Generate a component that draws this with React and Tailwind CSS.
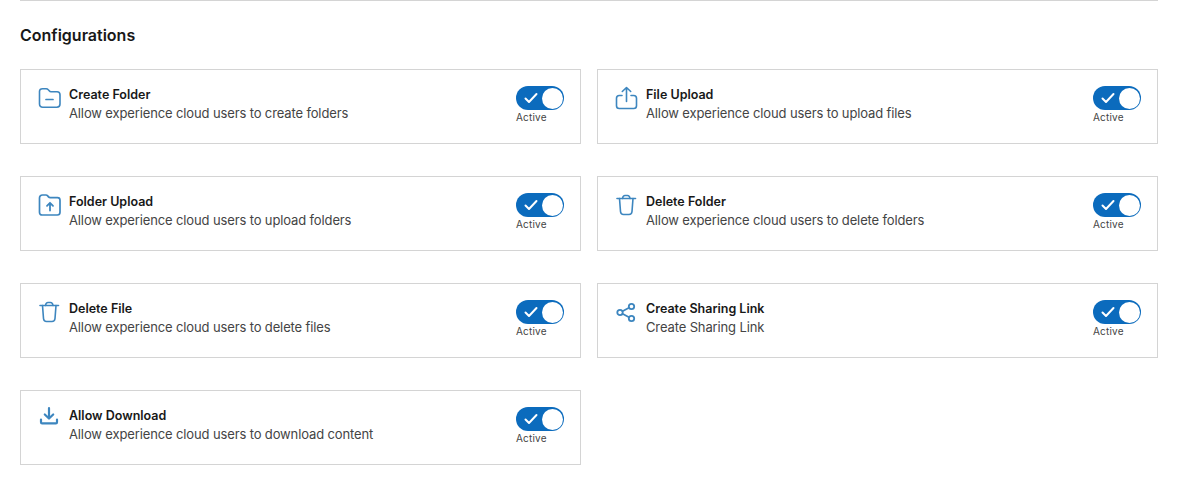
const C = "#3d86bf";
const stroke = { fill: "none", stroke: C, strokeWidth: 1.6, strokeLinecap: "round", strokeLinejoin: "round" };

const FolderMinus = () => (
  <svg width="24" height="24" viewBox="0 0 24 24" {...stroke}>
    <path d="M1.500 5.500C1.500 3.700 2.700 2.700 4.500 2.700h3.600c1 0 1.600.4 2.200 1.100l.9 1c.5.6 1 .9 1.800.9h6c1.900 0 3 1.200 3 3v9.300c0 2-1.300 3.200-3.200 3.200H4.700c-1.900 0-3.200-1.200-3.200-3.200z" />
    <path d="M8 13.500h7" strokeWidth="1.700" />
  </svg>
);
const Upload = () => (
  <svg width="24" height="24" viewBox="0 0 24 24" {...stroke}>
    <path d="M7 9.500H4.300C2.600 9.500 1.500 10.600 1.500 12.300v7.400c0 1.800 1.100 2.800 2.800 2.800h14.400c1.700 0 2.800-1 2.800-2.800v-7.400c0-1.700-1.100-2.800-2.800-2.800H16" />
    <path d="M11.500 15.500V1.500M7.300 5.500l4.200-4 4.200 4" />
  </svg>
);
const FolderUp = () => (
  <svg width="24" height="24" viewBox="0 0 24 24" {...stroke} strokeWidth="1.700">
    <path d="M1.500 5C1.500 3.200 2.600 2 4.500 2h3.400c.8 0 1.300.3 1.800.9l.8 1c.5.600 1 .8 1.800.8h7.200c1.600 0 2.500 1 2.500 2.600v12c0 1.700-1 2.700-2.700 2.700H4.200c-1.700 0-2.700-1-2.700-2.700z" />
    <path d="M12 17.500V10M9 12.800l3-3 3 3" strokeWidth="1.800" />
  </svg>
);
const Trash = () => (
  <svg width="24" height="24" viewBox="0 0 24 24" {...stroke}>
    <path d="M2 5.500h18.500" />
    <path d="M7.500 5.500c.3-2 1-3 2.500-3h2.500c1.500 0 2.200 1 2.500 3" />
    <path d="M4.500 5.500l1 13c.2 2 1.200 3 3 3h5.500c1.800 0 2.800-1 3-3l1-13" />
  </svg>
);
const Share = () => (
  <svg width="24" height="24" viewBox="0 0 24 24" {...stroke} strokeWidth="1.800">
    <circle cx="5" cy="12.500" r="2.700" />
    <circle cx="16.500" cy="6.500" r="2.700" />
    <circle cx="16.500" cy="18.500" r="2.700" />
    <path d="M7.500 11.200l6.500-3.400M7.500 13.800l6.500 3.400" />
  </svg>
);
const Download = () => (
  <svg width="24" height="24" viewBox="0 0 24 24" fill="none" stroke={C} strokeLinecap="round" strokeLinejoin="round">
    <path d="M11 1.200v10M6.800 7.500l4.200 4 4.200-4" strokeWidth="2.200" />
    <path d="M3 12.500v2.800c0 .7.400 1.100 1.100 1.100h13.800c.7 0 1.100-.4 1.100-1.100v-2.800" strokeWidth="2.200" />
  </svg>
);

const Toggle = () => (
  <div className="flex flex-col shrink-0 w-12">
    <div className="flex items-center justify-between w-12 h-6 rounded-full bg-[#0b6bbd] pl-[8px] pr-[1.500px]">
      <svg width="14" height="12" viewBox="0 0 14 12" fill="none" stroke="#fff" strokeWidth="2" strokeLinecap="round" strokeLinejoin="round">
        <path d="M1.500 6.500 5 10l7.500-8" />
      </svg>
      <div className="w-[21px] h-[21px] rounded-full bg-white" />
    </div>
    <span className="text-[10px] leading-[14px] text-[#444] tracking-[0.2px]">Active</span>
  </div>
);

const items = [
  { icon: <FolderMinus />, t: "Create Folder", d: "Allow experience cloud users to create folders" },
  { icon: <Upload />, t: "File Upload", d: "Allow experience cloud users to upload files" },
  { icon: <FolderUp />, t: "Folder Upload", d: "Allow experience cloud users to upload folders" },
  { icon: <Trash />, t: "Delete Folder", d: "Allow experience cloud users to delete folders" },
  { icon: <Trash />, t: "Delete File", d: "Allow experience cloud users to delete files" },
  { icon: <Share />, t: "Create Sharing Link", d: "Create Sharing Link" },
  { icon: <Download />, t: "Allow Download", d: "Allow experience cloud users to download content" },
];

export default function App() {
  return (
    <div className="w-[1177px] h-[494px] bg-white overflow-hidden pl-5 font-['Inter',sans-serif]">
      <div className="w-[1138px]">
        <div className="h-px bg-[#d4d4d4]" />
        <h2 className="mt-[24px] text-[16px] leading-5 font-semibold text-[#181818]">Configurations</h2>
        <div className="grid grid-cols-2 gap-x-4 gap-y-8 mt-[24px]">
          {items.map((it) => (
            <div key={it.t} className="flex items-start h-[75px] border border-[#d4d4d4] pl-[17px] pr-4 pt-[16px]">
              <div className="w-6 h-6 mr-[7px] shrink-0">{it.icon}</div>
              <div className="flex-1 min-w-0">
                <div className="text-[12.500px] leading-[18px] font-semibold text-[#181818]">{it.t}</div>
                <div className="text-[13px] leading-[19px] tracking-[-0.13px] text-[#444]">{it.d}</div>
              </div>
              <Toggle />
            </div>
          ))}
        </div>
      </div>
    </div>
  );
}
